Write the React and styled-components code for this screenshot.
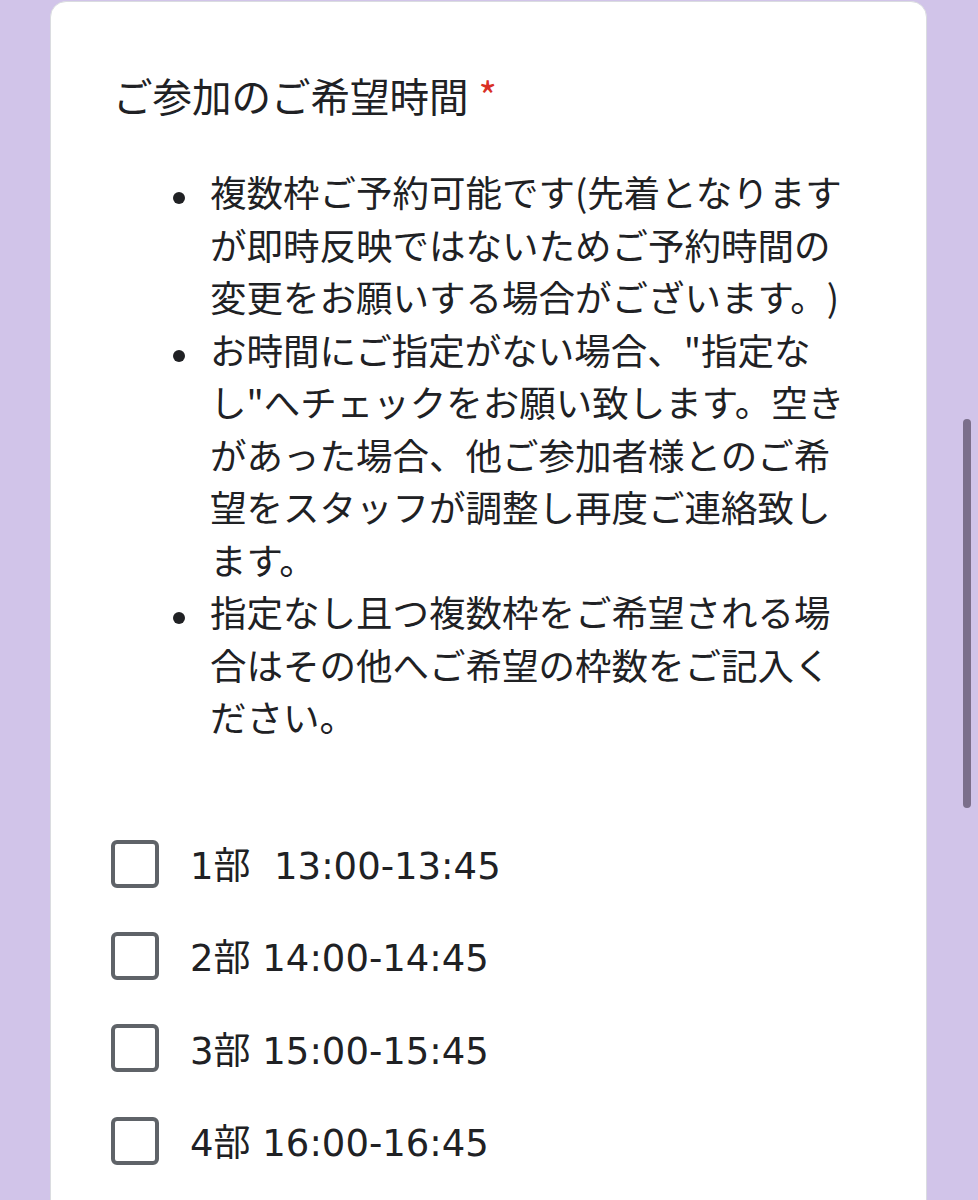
import React from "react";
import styled, { createGlobalStyle } from "styled-components";

const GlobalStyle = createGlobalStyle`
  html, body {
    margin: 0;
    padding: 0;
    background: #d1c4e9;
  }
  body {
    font-family: "Noto Sans CJK JP", "Noto Sans", sans-serif;
    color: #202124;
    overflow: hidden;
    text-spacing-trim: space-all;
  }
`;

const Page = styled.div`
  position: relative;
  min-height: 1200px;
  padding: 1px 51px 0 50px;
  box-sizing: border-box;
`;

const Card = styled.section`
  background: #ffffff;
  border: 1px solid #dadce0;
  border-radius: 16px;
  padding: 67px 40px 60px 62px;
  min-height: 1300px;
`;

const Title = styled.h2`
  margin: 0;
  font-size: 39.5px;
  line-height: 51px;
  font-weight: 400;
  color: #202124;
  white-space: nowrap;
`;

const Required = styled.span`
  color: #d93025;
  margin-left: 10px;
`;

const Notes = styled.ul`
  list-style: none;
  margin: 46px 0 0 0;
  padding: 0 0 0 97px;
`;

const Note = styled.li`
  position: relative;
  font-size: 36.5px;
  line-height: 52.5px;
  white-space: nowrap;
  color: #202124;
  text-spacing-trim: space-all;

  &::before {
    content: "";
    position: absolute;
    left: -37px;
    top: 26px;
    width: 12px;
    height: 12px;
    border-radius: 50%;
    background: #202124;
  }
`;

const Options = styled.div`
  margin-top: 74px;
  display: flex;
  flex-direction: column;
`;

const Option = styled.label`
  display: flex;
  align-items: center;
  height: 92.3px;
  gap: 31px;
  margin-left: -2px;
`;

const Box = styled.span`
  width: 48px;
  height: 48px;
  box-sizing: border-box;
  border: 4px solid #5f6368;
  border-radius: 6px;
  flex: none;
`;

const OptionText = styled.span`
  font-family: "DejaVu Sans", "Noto Sans CJK JP", sans-serif;
  font-size: 37px;
  line-height: 1;
  padding-top: 6px;
  white-space: pre;
  color: #202124;
`;

const ScrollThumb = styled.div`
  position: absolute;
  left: 963px;
  top: 419px;
  width: 8px;
  height: 389px;
  border-radius: 4px;
  background: #7b6f8b;
`;

const notes = [
  ["複数枠ご予約可能です(先着となります", "が即時反映ではないためご予約時間の", "変更をお願いする場合がございます。)"],
  ["お時間にご指定がない場合、\"指定な", "し\"へチェックをお願い致します。空き", "があった場合、他ご参加者様とのご希", "望をスタッフが調整し再度ご連絡致し", "ます。"],
  ["指定なし且つ複数枠をご希望される場", "合はその他へご希望の枠数をご記入く", "ださい。"],
];

const options = [
  "1部  13:00-13:45",
  "2部 14:00-14:45",
  "3部 15:00-15:45",
  "4部 16:00-16:45",
];

export default function App() {
  return (
    <>
      <GlobalStyle />
      <Page>
        <Card>
          <Title>
            ご参加のご希望時間<Required>*</Required>
          </Title>
          <Notes>
            {notes.map((lines, i) => (
              <Note key={i}>
                {lines.map((l, j) => (
                  <React.Fragment key={j}>
                    {l}
                    {j < lines.length - 1 && <br />}
                  </React.Fragment>
                ))}
              </Note>
            ))}
          </Notes>
          <Options>
            {options.map((o) => (
              <Option key={o}>
                <Box />
                <OptionText>{o}</OptionText>
              </Option>
            ))}
          </Options>
        </Card>
        <ScrollThumb />
      </Page>
    </>
  );
}
